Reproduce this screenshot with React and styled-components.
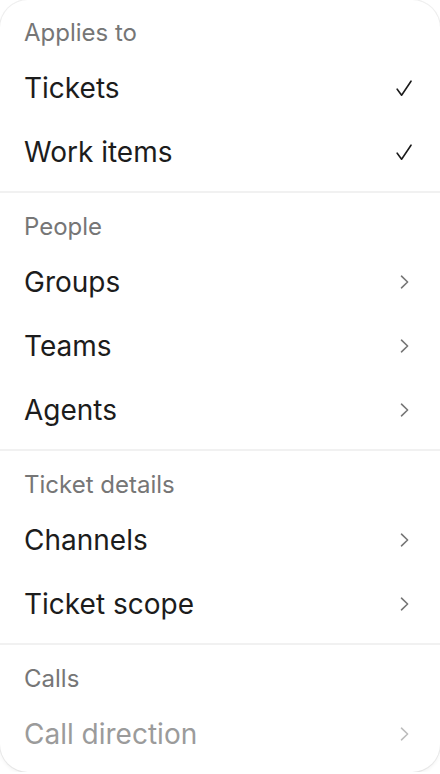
import React from 'react';
import styled, { createGlobalStyle } from 'styled-components';

const GlobalStyle = createGlobalStyle`
  html, body {
    margin: 0;
    padding: 0;
    background: #ffffff;
  }
  body {
    font-family: Inter, "Noto Sans", "Liberation Sans", sans-serif;
    -webkit-font-smoothing: antialiased;
  }
`;

const Panel = styled.div`
  width: 440px;
  height: 772px;
  box-sizing: border-box;
  background: #ffffff;
  border-radius: 28px;
  box-shadow: 0 0 0 1px rgba(0, 0, 0, 0.06), 0 2px 4px rgba(0, 0, 0, 0.06);
  overflow: hidden;
  display: flex;
  flex-direction: column;
`;

const Section = styled.div`
  display: flex;
  flex-direction: column;
  padding: ${p => (p.first ? '8px' : '9px')} 0 7px;
  border-top: ${p => (p.first ? 'none' : '2px solid #f1f1f1')};
`;

const Heading = styled.div`
  height: 48px;
  display: flex;
  align-items: center;
  padding: 0 24px;
  font-size: 24px;
  color: #767676;
`;

const Row = styled.div`
  height: 64px;
  display: flex;
  align-items: center;
  justify-content: space-between;
  padding: 0 28px 0 24px;
  font-size: 28px;
  color: ${p => (p.disabled ? '#9b9b9b' : '#1c1c1c')};
`;

const IconBox = styled.span`
  width: 16px;
  display: flex;
  justify-content: center;
  align-items: center;
  color: ${p => p.color};
`;

const Check = () => (
  <svg width="16" height="17" viewBox="0 0 16 17" fill="none">
    <path d="M1.2 9.2 L5.6 15.2 L15 1.2" stroke="currentColor" strokeWidth="1.6" strokeLinecap="round" strokeLinejoin="round" />
  </svg>
);

const Chevron = () => (
  <svg width="9" height="14" viewBox="0 0 9 14" fill="none">
    <path d="M1.5 1.2 L7.6 7 L1.5 12.8" stroke="currentColor" strokeWidth="1.6" strokeLinecap="round" strokeLinejoin="round" />
  </svg>
);

const sections = [
  { title: 'Applies to', items: [{ label: 'Tickets', icon: 'check' }, { label: 'Work items', icon: 'check' }] },
  { title: 'People', items: [{ label: 'Groups' }, { label: 'Teams' }, { label: 'Agents' }] },
  { title: 'Ticket details', items: [{ label: 'Channels' }, { label: 'Ticket scope' }] },
  { title: 'Calls', items: [{ label: 'Call direction', disabled: true }] },
];

const App = () => {
  return (
    <>
      <GlobalStyle />
      <Panel>
        {sections.map((s, i) => (
          <Section key={s.title} first={i === 0}>
            <Heading>{s.title}</Heading>
            {s.items.map(item => (
              <Row key={item.label} disabled={item.disabled}>
                <span>{item.label}</span>
                {item.icon === 'check' ? (
                  <IconBox color="#1c1c1c"><Check /></IconBox>
                ) : (
                  <IconBox color={item.disabled ? '#bdbdbd' : '#767676'}><Chevron /></IconBox>
                )}
              </Row>
            ))}
          </Section>
        ))}
      </Panel>
    </>
  );
};

export default App;
